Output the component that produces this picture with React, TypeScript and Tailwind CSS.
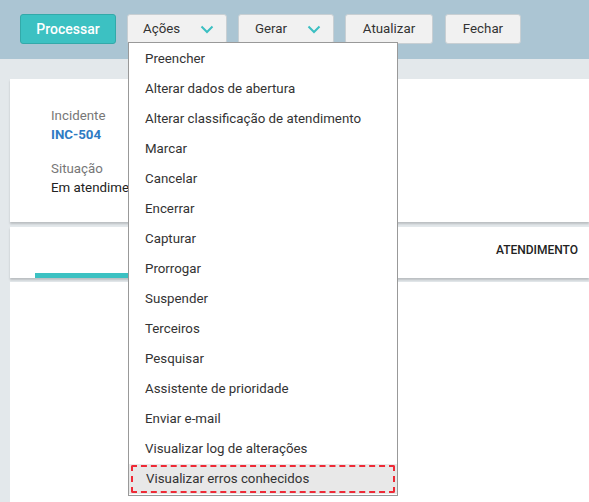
const acoes = [
  "Preencher",
  "Alterar dados de abertura",
  "Alterar classificação de atendimento",
  "Marcar",
  "Cancelar",
  "Encerrar",
  "Capturar",
  "Prorrogar",
  "Suspender",
  "Terceiros",
  "Pesquisar",
  "Assistente de prioridade",
  "Enviar e-mail",
  "Visualizar log de alterações",
  "Visualizar erros conhecidos",
];

function Chevron() {
  return (
    <svg width="14" height="9" viewBox="0 0 14 9" className="ml-auto">
      <path d="M1.5 1.5 L7 7 L12.5 1.5" fill="none" stroke="#3bbfc2" strokeWidth="2" />
    </svg>
  );
}

export default function App() {
  return (
    <div className="relative h-[502px] w-[589px] overflow-hidden bg-[#e3e8eb] text-[13.3px] text-[#333] [font-family:Roboto,'Liberation_Sans',sans-serif]">
      <div className="flex h-[59px] items-start gap-[11px] bg-[#abc5d3] px-[20px] pt-[14px]">
        <button className="h-[30px] w-[96px] rounded-[3px] border border-[#33a9a9] bg-[#3cc1c2] text-[14px] font-medium text-white">Processar</button>
        <button className="flex h-[30px] w-[100px] items-center rounded-[3px] border border-[#c8cfd3] bg-[#f1f1f1] pl-[15px] pr-[12px] text-[#333]">Ações<Chevron /></button>
        <button className="flex h-[30px] w-[96px] items-center rounded-[3px] border border-[#c8cfd3] bg-[#f1f1f1] pl-[16px] pr-[12px] text-[#333]">Gerar<Chevron /></button>
        <button className="h-[30px] w-[88px] rounded-[3px] border border-[#c8cfd3] bg-[#f1f1f1] text-[#333]">Atualizar</button>
        <button className="ml-px h-[30px] w-[76px] rounded-[3px] border border-[#c8cfd3] bg-[#f1f1f1] text-[#333]">Fechar</button>
      </div>

      <div className="ml-[10px] mt-[20px] flex flex-col">
        <div className="h-[143px] bg-white pl-[41px] pt-[27px] leading-[19px] shadow-[0_2px_2px_rgba(0,0,0,0.18)]">
          <div className="text-[#777]">Incidente</div>
          <div className="font-bold text-[#2f7bc4]">INC-504</div>
          <div className="mt-[15px] text-[#777]">Situação</div>
          <div className="text-[#222]">Em atendimento</div>
        </div>
        <div className="mt-[5px] flex h-[51px] items-end bg-white shadow-[0_2px_2px_rgba(0,0,0,0.18)]">
          <div className="ml-[25px] h-[5px] w-[200px] bg-[#3cc1c2]" />
          <div className="mb-[19px] ml-auto pr-[11px] text-[12px] font-medium text-[#222]">ATENDIMENTO</div>
        </div>
        <div className="mt-[4px] h-[240px] bg-white" />
      </div>

      <div className="absolute left-[128px] top-[42px] w-[270px] border border-[#999] bg-white py-px">
        {acoes.map((a, i) => {
          const last = i === acoes.length - 1;
          return last ? (
            <div key={a} className="bg-[#e8e8e8] px-[2px] py-[1px]">
              <div className="flex h-[28px] items-center rounded-[2px] border-2 border-dashed border-[#ee2a36] pl-[13px] text-[#333]">{a}</div>
            </div>
          ) : (
            <div key={a} className="flex h-[30px] items-center pl-[16px] text-[#333]">{a}</div>
          );
        })}
      </div>
    </div>
  );
}
